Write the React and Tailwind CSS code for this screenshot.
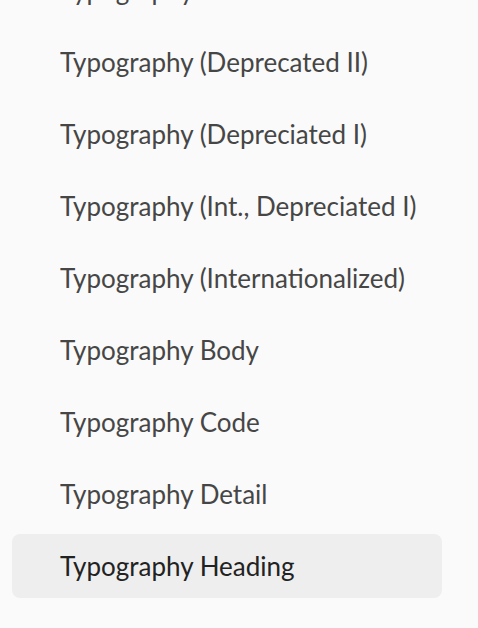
import React from 'react';

const items = [
  "Typography",
  "Typography (Deprecated II)",
  "Typography (Depreciated I)",
  "Typography (Int., Depreciated I)",
  "Typography (Internationalized)",
  "Typography Body",
  "Typography Code",
  "Typography Detail",
  "Typography Heading",
  "Well",
];

function App() {
  const selected = "Typography Heading";

  return (
    <div className="w-[478px] h-[628px] overflow-hidden bg-[#fafafa]" style={{ fontFamily: '"Lato", "Open Sans", sans-serif' }}>
      {/* side nav list */}
      <ul className="mt-[-42px] flex flex-col gap-2 pl-3 w-[442px]">
        {items.map((item) => (
          <li
            key={item}
            className={
              item === selected
                ? "h-16 flex items-center pl-12 rounded-lg bg-[#eeeeee] text-[#222222] text-[26px]"
                : "h-16 flex items-center pl-12 rounded-lg text-[#464646] text-[26px]"
            }
          >
            {item}
          </li>
        ))}
      </ul>
    </div>
  );
}

export default App;
